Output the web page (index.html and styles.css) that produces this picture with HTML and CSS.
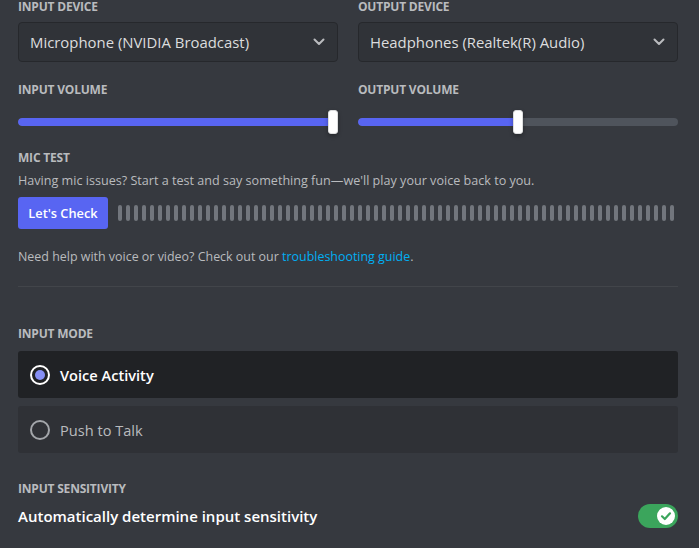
FILE: index.html
```html
<!DOCTYPE html>
<html lang="en">
<head>
<meta charset="utf-8">
<title>Voice Settings</title>
<link rel="stylesheet" href="styles.css">
</head>
<body>
<main class="page">
  <div class="cols">
    <div class="col">
      <h5 class="label">Input Device</h5>
      <div class="select">
        <span class="select-value">Microphone (NVIDIA Broadcast)</span>
        <svg class="chevron" width="12" height="8" viewBox="0 0 12 8"><path d="M1.5 1.5 L6 6 L10.5 1.5" fill="none" stroke="#b9bbbe" stroke-width="2" stroke-linecap="round" stroke-linejoin="round"/></svg>
      </div>
    </div>
    <div class="col">
      <h5 class="label">Output Device</h5>
      <div class="select">
        <span class="select-value">Headphones (Realtek(R) Audio)</span>
        <svg class="chevron" width="12" height="8" viewBox="0 0 12 8"><path d="M1.5 1.5 L6 6 L10.5 1.5" fill="none" stroke="#b9bbbe" stroke-width="2" stroke-linecap="round" stroke-linejoin="round"/></svg>
      </div>
    </div>
  </div>

  <div class="cols vol-row">
    <div class="col">
      <h5 class="label">Input Volume</h5>
      <div class="slider">
        <div class="track"><div class="fill" style="width:315px"></div></div>
        <div class="grabber" style="left:310px"></div>
      </div>
    </div>
    <div class="col">
      <h5 class="label">Output Volume</h5>
      <div class="slider">
        <div class="track"><div class="fill" style="width:160px"></div></div>
        <div class="grabber" style="left:155px"></div>
      </div>
    </div>
  </div>

  <section class="mic-test">
    <h5 class="label">Mic Test</h5>
    <p class="desc">Having mic issues? Start a test and say something fun—we'll play your voice back to you.</p>
    <div class="mic-row">
      <button class="btn">Let's Check</button>
      <div class="bars" id="bars"></div>
    </div>
    <p class="help">Need help with voice or video? Check out our <a href="#" class="link">troubleshooting guide</a>.</p>
  </section>

  <hr class="divider">

  <section class="mode">
    <h5 class="label">Input Mode</h5>
    <div class="radio-item selected">
      <span class="radio"><span class="dot"></span></span>
      <span class="radio-text">Voice Activity</span>
    </div>
    <div class="radio-item">
      <span class="radio"></span>
      <span class="radio-text">Push to Talk</span>
    </div>
  </section>

  <section class="sens">
    <h5 class="label">Input Sensitivity</h5>
    <div class="sens-row">
      <span class="sens-text">Automatically determine input sensitivity</span>
      <span class="toggle">
        <span class="knob">
          <svg width="18" height="18" viewBox="0 0 18 18"><path d="M5 9.3 L7.8 12 L13 6.3" fill="none" stroke="#3ba55c" stroke-width="2.2" stroke-linecap="round" stroke-linejoin="round"/></svg>
        </span>
      </span>
    </div>
  </section>
</main>
<script>
  var b = document.getElementById('bars');
  for (var i = 0; i < 70; i++) { var s = document.createElement('span'); s.className = 'bar'; b.appendChild(s); }
</script>
</body>
</html>
```
FILE: styles.css
```css
* { box-sizing: border-box; }
html, body {
  margin: 0;
  padding: 0;
  background: #36393f;
  height: 100%;
  overflow: hidden;
}
body {
  font-family: "Open Sans", "Noto Sans", sans-serif;
  color: #dcddde;
}
.page {
  width: 660px;
  margin-left: 18px;
  padding-top: 0;
}
.label {
  margin: 0;
  font-size: 12px;
  line-height: 14px;
  font-weight: 700;
  text-transform: uppercase;
  color: #b9bbbe;
  letter-spacing: -0.2px;
}
.cols {
  display: grid;
  grid-template-columns: 320px 320px;
  column-gap: 20px;
}
.col .label { margin-bottom: 8px; }
.select {
  height: 40px;
  background: #303338;
  border: 1px solid #26282c;
  border-radius: 4px;
  display: flex;
  align-items: center;
  justify-content: space-between;
  padding: 0 12px 0 11px;
}
.select-value {
  font-size: 14.9px;
  color: #dcddde;
}
.chevron { display: block; }

.vol-row { margin-top: 21px; }
.vol-row .label { margin-bottom: 13px; }
.slider {
  position: relative;
  height: 24px;
  display: flex;
  align-items: center;
}
.track {
  width: 100%;
  height: 8px;
  border-radius: 4px;
  background: #4f545c;
  overflow: hidden;
}
.fill {
  height: 100%;
  background: #5865f2;
  border-radius: 4px 0 0 4px;
}
.grabber {
  position: absolute;
  top: 0;
  width: 10px;
  height: 24px;
  background: #fff;
  border: 1px solid #dcddde;
  border-radius: 3px;
  box-shadow: 0 2px 4px rgba(0,0,0,0.3);
}

.mic-test { margin-top: 17px; }
.desc {
  margin: 7px 0 0;
  font-size: 12.6px;
  line-height: 18px;
  color: #b9bbbe;
}
.mic-row {
  margin-top: 7px;
  display: flex;
  align-items: center;
  gap: 10px;
}
.btn {
  width: 90px;
  height: 32px;
  border: 0;
  border-radius: 3px;
  background: #5865f2;
  color: #fff;
  font-family: "Open Sans", sans-serif;
  font-size: 12.8px;
  font-weight: 600;
  padding: 0;
}
.bars {
  display: flex;
  gap: 4px;
}
.bar {
  width: 4px;
  height: 16px;
  border-radius: 2px;
  background: #72767d;
}
.help {
  margin: 18px 0 0;
  font-size: 12.45px;
  line-height: 20px;
  color: #b9bbbe;
}
.link { color: #00aff4; text-decoration: none; }

.divider {
  margin: 19px 0 0;
  border: 0;
  height: 1px;
  background: #42454a;
}

.mode { margin-top: 40px; }
.mode .label { margin-bottom: 10px; }
.radio-item {
  height: 47px;
  border-radius: 3px;
  background: #2f3136;
  display: flex;
  align-items: center;
  padding-left: 12px;
  gap: 10px;
  margin-bottom: 8px;
}
.radio-item.selected { background: #202225; }
.radio {
  width: 20px;
  height: 20px;
  border-radius: 50%;
  border: 2px solid #a3a6aa;
  display: flex;
  align-items: center;
  justify-content: center;
}
.selected .radio { border-color: #fff; }
.dot {
  width: 10px;
  height: 10px;
  border-radius: 50%;
  background: #868ff5;
}
.radio-text {
  font-size: 14.6px;
  font-weight: 500;
  color: #b9bbbe;
}
.selected .radio-text { color: #fff; font-weight: 600; }

.sens { margin-top: 29px; }
.sens .label { margin-bottom: 8px; }
.sens-row {
  height: 24px;
  display: flex;
  align-items: center;
  justify-content: space-between;
}
.sens-text {
  font-size: 15px;
  font-weight: 600;
  color: #fff;
}
.toggle {
  width: 40px;
  height: 24px;
  border-radius: 12px;
  background: #3ba55c;
  display: flex;
  align-items: center;
  justify-content: flex-end;
  padding-right: 3px;
}
.knob {
  width: 18px;
  height: 18px;
  border-radius: 50%;
  background: #fff;
  display: block;
}
.knob svg { display: block; }
```
